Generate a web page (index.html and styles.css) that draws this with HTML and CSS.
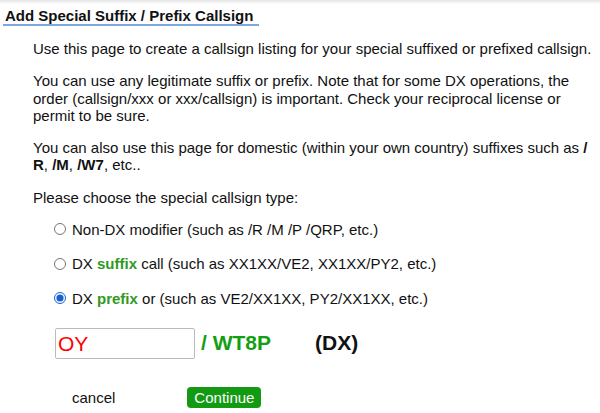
FILE: index.html
```html
<!DOCTYPE html>
<html>
<head>
<meta charset="utf-8">
<link rel="stylesheet" href="styles.css">
</head>
<body>
<h1 class="title">Add Special Suffix / Prefix Callsign</h1>
<div class="content">
  <p>Use this page to create a callsign listing for your special suffixed or prefixed callsign.</p>
  <p>You can use any legitimate suffix or prefix. Note that for some DX operations, the order (callsign/xxx or xxx/callsign) is important. Check your reciprocal license or permit to be sure.</p>
  <p>You can also use this page for domestic (within your own country) suffixes such as <b>/<wbr>R</b>, <b>/M</b>, <b>/W7</b>, etc..</p>
  <p>Please choose the special callsign type:</p>
  <div class="options">
    <label class="opt"><input type="radio" name="t"><span>Non-DX modifier (such as /R /M /P /QRP, etc.)</span></label>
    <label class="opt"><input type="radio" name="t"><span>DX <b class="g">suffix</b> call (such as XX1XX/VE2, XX1XX/PY2, etc.)</span></label>
    <label class="opt"><input type="radio" name="t" checked><span>DX <b class="g">prefix</b> or (such as VE2/XX1XX, PY2/XX1XX, etc.)</span></label>
  </div>
  <div class="callrow">
    <input class="pre" type="text" value="OY">
    <span class="call">/ WT8P</span>
    <span class="dx">(DX)</span>
  </div>
  <div class="actions">
    <span class="cancel">cancel</span>
    <button class="cont">Continue</button>
  </div>
</div>
</body>
</html>
```
FILE: styles.css
```css
html, body { margin: 0; padding: 0; }
body {
  font-family: "Liberation Sans", Arial, sans-serif;
  color: #111;
  font-size: 15px;
  background: linear-gradient(#e4e4e4, #ffffff 4px) no-repeat;
  background-color: #fff;
}
.title {
  display: inline-block;
  margin: 7px 0 0 3px;
  padding: 0 6px 0 2px;
  font-size: 15px;
  font-weight: bold;
  line-height: 17px;
  border-bottom: 2px solid #7fa6e0;
}
.content { padding: 14px 4px 0 33px; }
.content p { margin: 0 0 15px; line-height: 17.25px; }
.options { display: flex; flex-direction: column; gap: 17.5px; padding-left: 21px; }
.opt { display: flex; align-items: center; line-height: 17px; }
.opt input { margin: 0 6px 0 0; width: 12px; height: 12px; accent-color: #1a5fd0; flex: none; }
.g { color: #2f9a22; }
.callrow { display: flex; align-items: center; margin: 21px 0 0 22px; }
.pre {
  width: 140px; height: 31px; box-sizing: border-box;
  border: 1px solid #bbb; border-radius: 2px;
  font-family: "Liberation Sans", Arial, sans-serif;
  font-size: 21px; color: #f00; padding: 2px 2px 0;
  margin: 0;
}
.call { color: #12a012; font-weight: bold; font-size: 21px; margin-left: 6px; }
.dx { font-weight: bold; font-size: 21px; margin-left: 44px; }
.actions { display: flex; align-items: center; margin: 28px 0 0 39px; }
.cancel { font-size: 15px; }
.cont {
  margin: 0 0 0 72px;
  background: #139a13; color: #fff; border: none; border-radius: 4px;
  font-family: "Liberation Sans", Arial, sans-serif; font-size: 15px;
  padding: 0 7px; height: 21px; line-height: 21px;
}
```
